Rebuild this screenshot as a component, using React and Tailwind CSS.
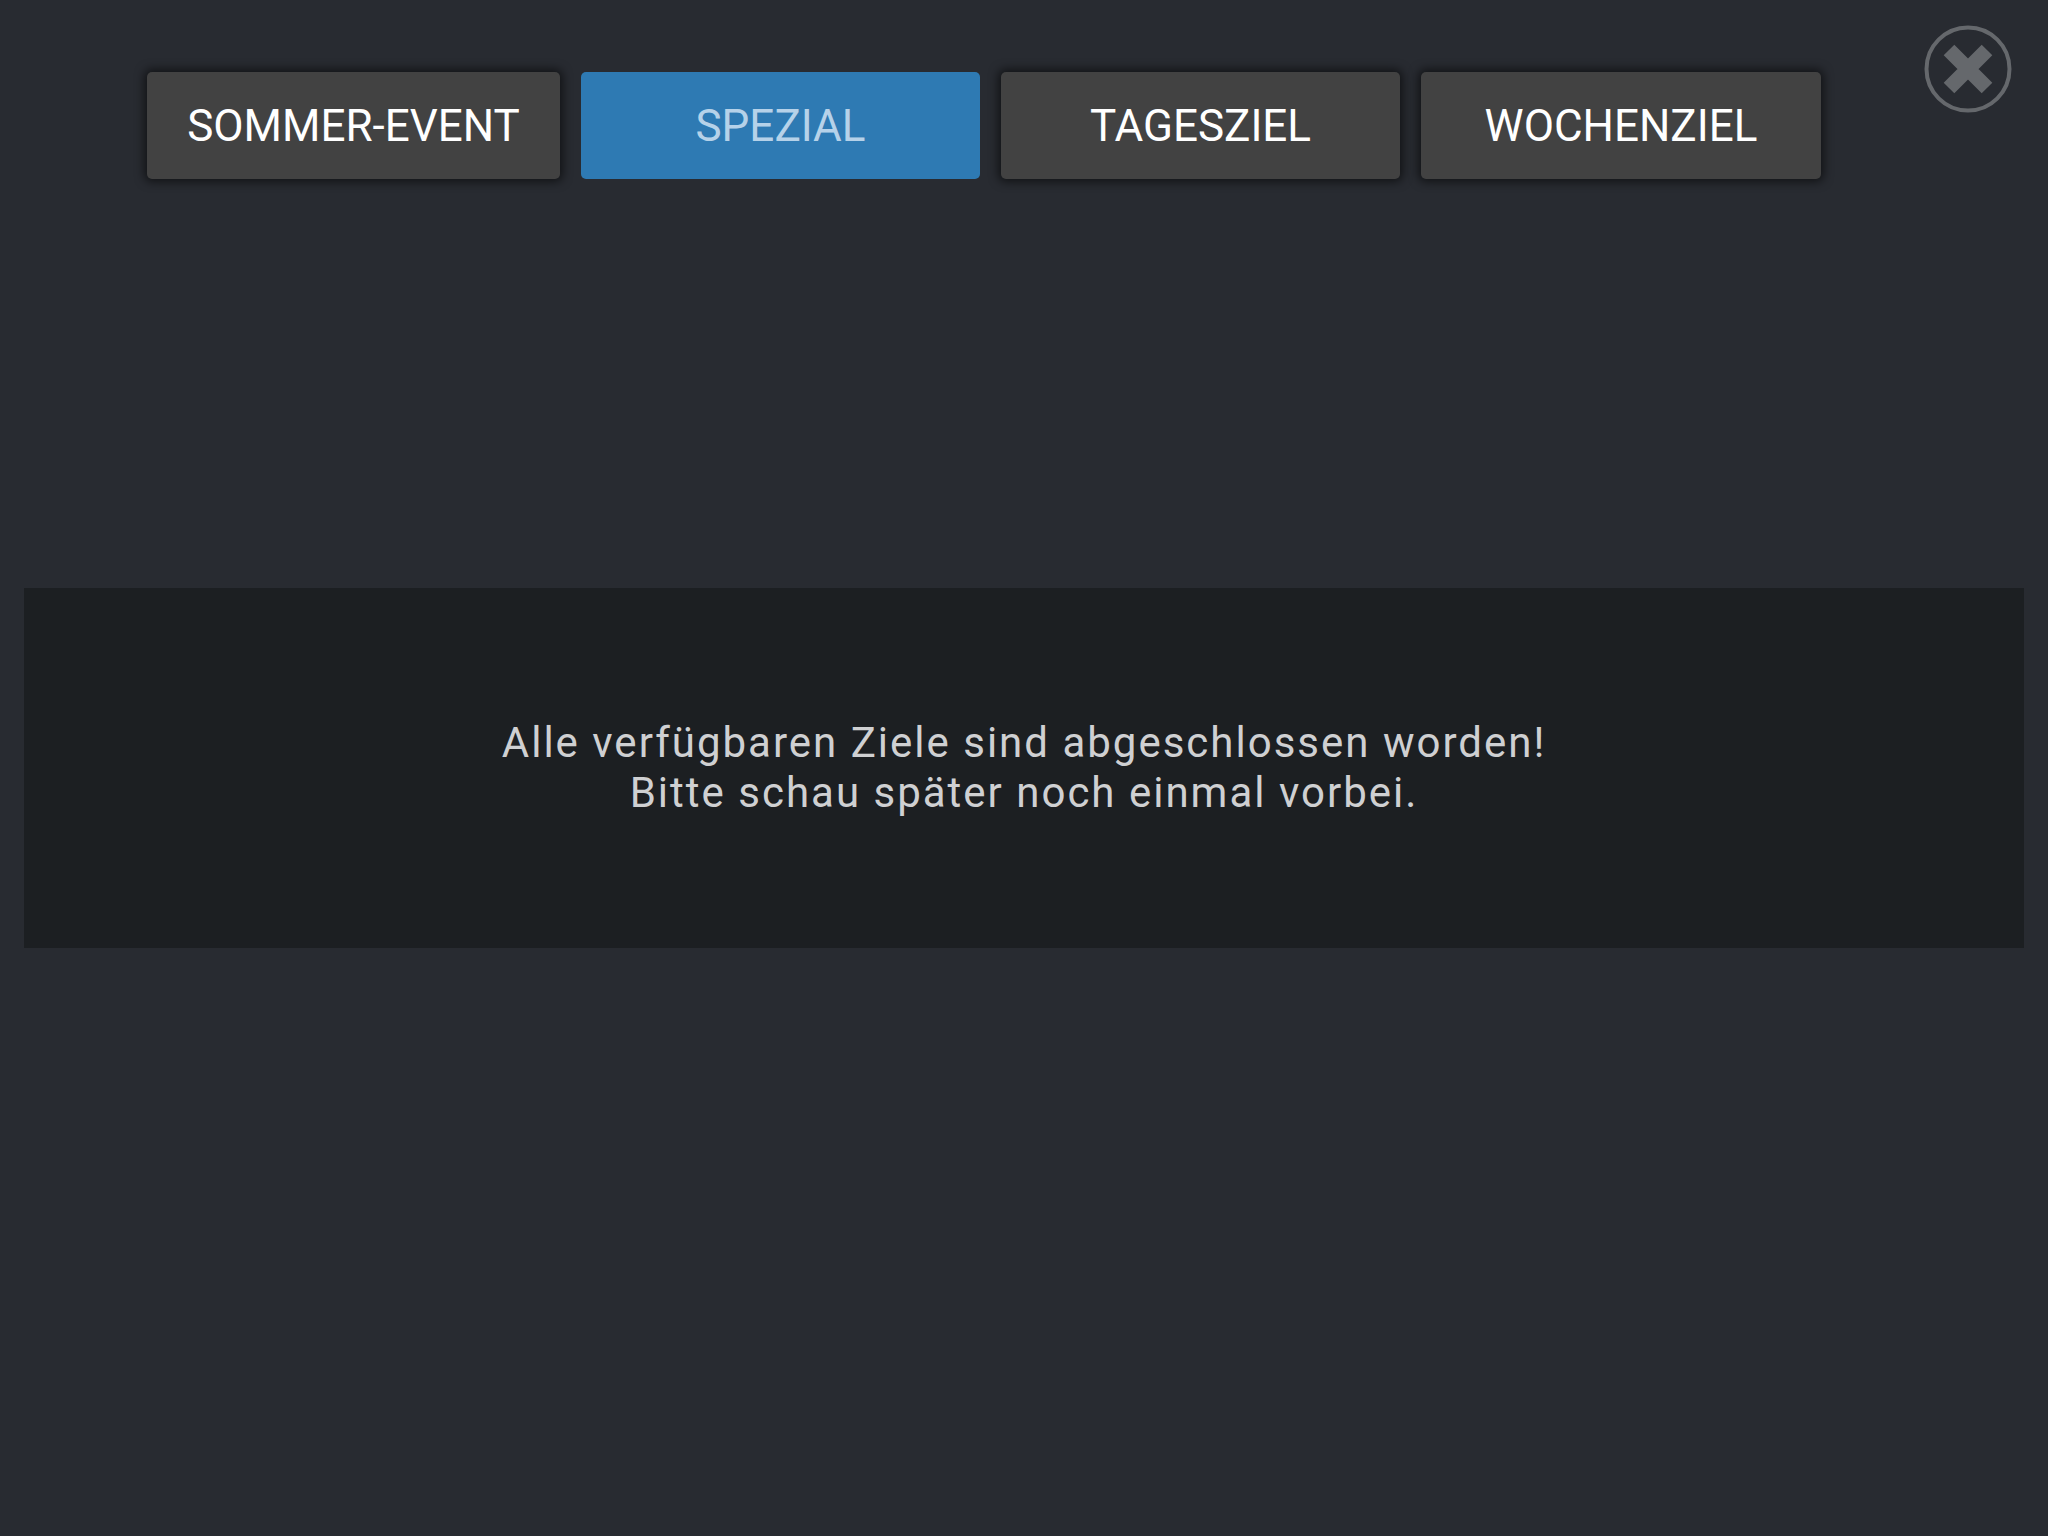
const TABS = [
  { id: 'sommer', label: 'SOMMER-EVENT', w: 'w-[413px]' },
  { id: 'spezial', label: 'SPEZIAL', w: 'w-[399px]' },
  { id: 'tages', label: 'TAGESZIEL', w: 'w-[399px]' },
  { id: 'wochen', label: 'WOCHENZIEL', w: 'w-[400px]' },
]

function CloseButton() {
  return (
    <button className="absolute right-[36px] top-[25px] h-[88px] w-[88px]">
      <svg viewBox="0 0 88 88" className="h-full w-full">
        <circle cx="44" cy="44" r="41.5" fill="none" stroke="#65686c" strokeWidth="4" />
        <path d="M25 25 L63 63 M63 25 L25 63" stroke="#65686c" strokeWidth="15" />
      </svg>
    </button>
  )
}

export default function App() {
  const active = 'spezial'

  return (
    <div
      className="relative h-screen w-full overflow-hidden bg-[#282b31]"
      style={{ fontFamily: 'Roboto, "Liberation Sans", sans-serif' }}
    >
      <CloseButton />

      {/* Tabs */}
      <div className="flex gap-[21px] pl-[147px] pt-[72px]">
        {TABS.map((t) => (
          <button
            key={t.id}
            className={`flex h-[107px] items-center justify-center rounded-[5px] text-[44px] ${t.w} ${
              active === t.id
                ? 'bg-[#2e7ab3] text-[#b6d2e9]'
                : 'bg-[#424242] text-white shadow-[0_0_10px_3px_rgba(0,0,0,0.55)]'
            }`}
          >
            {t.label}
          </button>
        ))}
      </div>

      {/* Empty state */}
      <div className="mx-[24px] mt-[409px] flex h-[360px] items-center justify-center bg-[#1c1f22]">
        <p className="text-center text-[42px] leading-[50px] tracking-[2px] text-[#cfd0d2]">
          Alle verfügbaren Ziele sind abgeschlossen worden!
          <br />
          Bitte schau später noch einmal vorbei.
        </p>
      </div>
    </div>
  )
}
